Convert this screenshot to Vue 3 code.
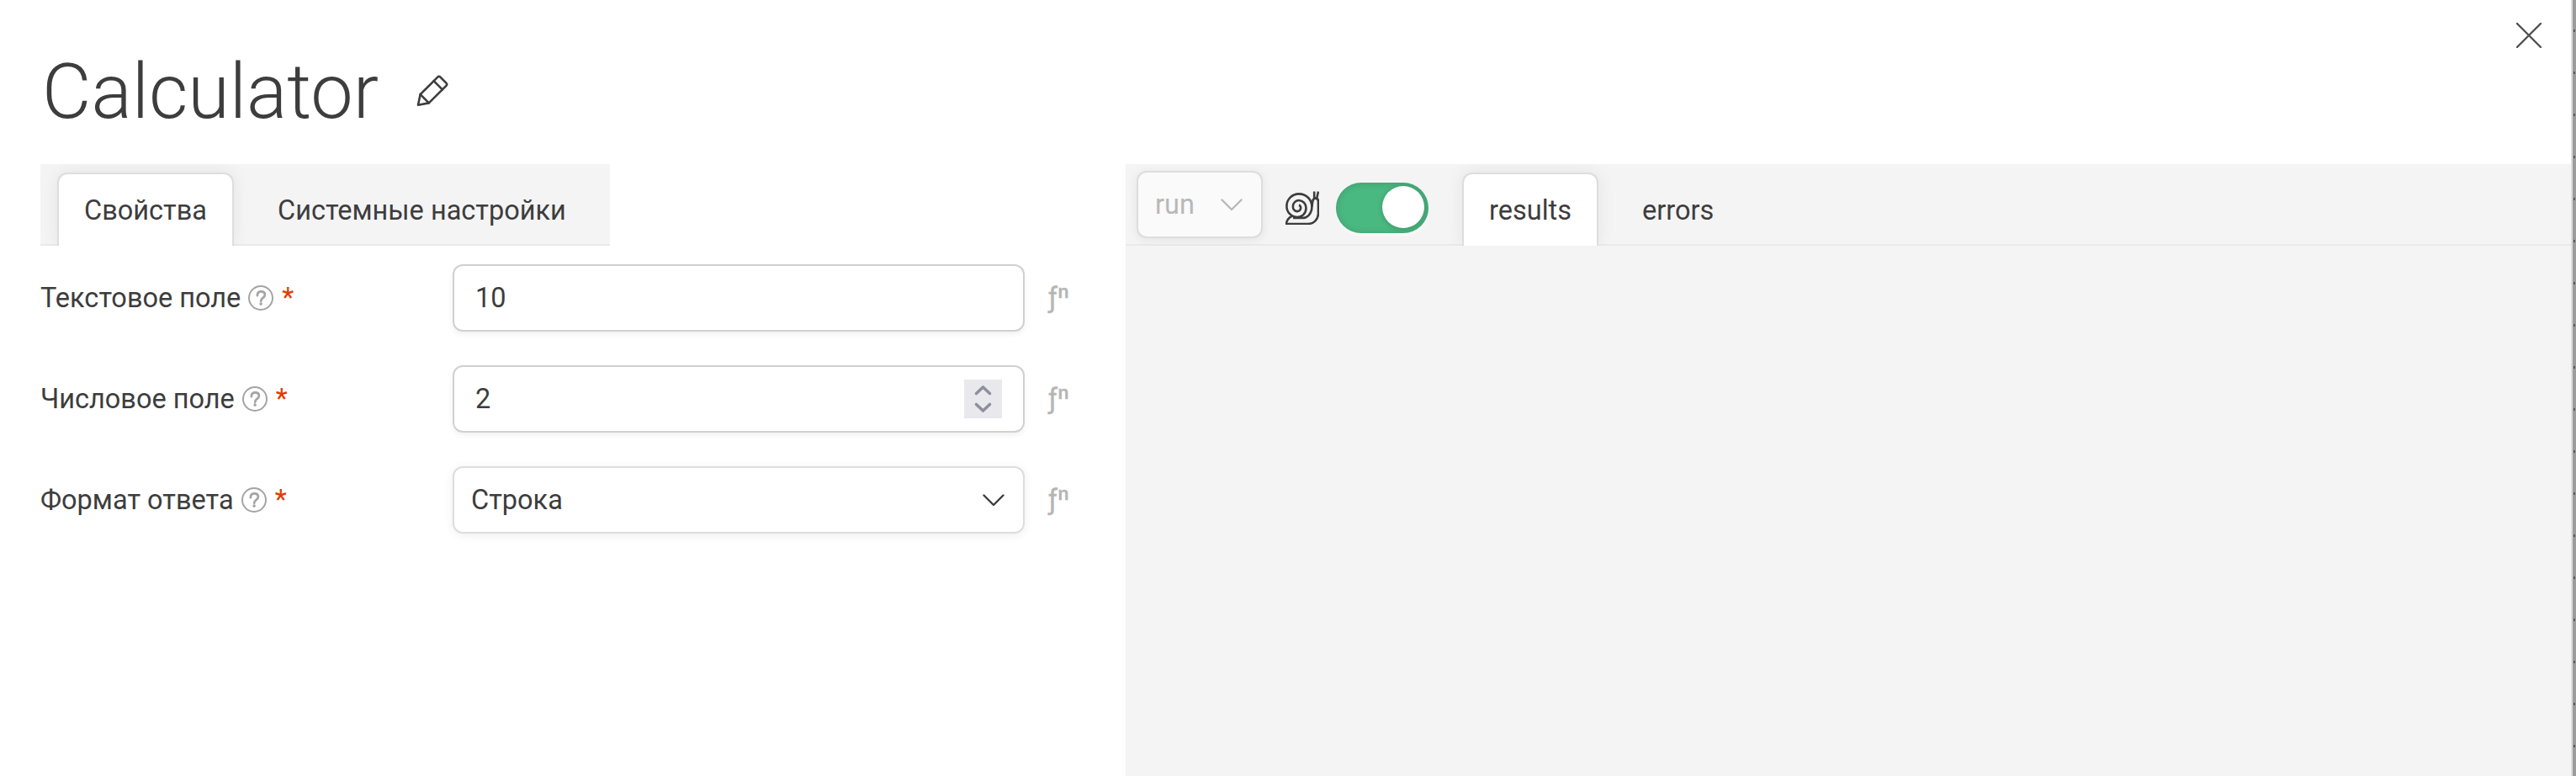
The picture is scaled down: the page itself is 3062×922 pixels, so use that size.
<script setup>
const rows = [
  { label: 'Текстовое поле', value: '10', kind: 'text' },
  { label: 'Числовое поле', value: '2', kind: 'number' },
  { label: 'Формат ответа', value: 'Строка', kind: 'select' },
]
</script>

<template>
  <div class="page">
    <main class="dialog">
      <header class="head">
        <h1 class="title">Calculator</h1>
        <svg class="pencil" viewBox="0 0 38 38">
          <path d="M4.6 23.2L25.2 2.6Q26.8 1.2 28.4 2.6L35.4 9.6Q36.9 11.2 35.4 12.8L14.8 33.4L2 35.8Z" />
          <path d="M4.6 23.2L14.8 33.4M20.6 7.2L30.8 17.4" />
        </svg>
        <svg class="close" viewBox="0 0 30 30"><path d="M1 1L29 29M29 1L1 29" /></svg>
      </header>
      <div class="columns">
        <section class="left">
          <nav class="tabs">
            <div class="tab active">Свойства</div>
            <div class="tab">Системные настройки</div>
          </nav>
          <div class="form">
            <div v-for="row in rows" :key="row.label" class="row">
              <div class="label">
                <span>{{ row.label }}</span>
                <svg class="help" viewBox="0 0 30 30">
                  <circle cx="15" cy="15" r="14" />
                  <path d="M10.9 12.2V11.6Q11 7.3 15.4 7.3Q19.9 7.3 19.9 11.3Q19.9 13.3 17.6 14.9Q15.2 16.6 15.2 18.8" />
                  <circle class="dot" cx="15.1" cy="22.1" r="1.8" />
                </svg>
                <span class="star">*</span>
              </div>
              <div class="field" :class="row.kind">
                <span>{{ row.value }}</span>
                <div v-if="row.kind === 'number'" class="spinner">
                  <svg viewBox="0 0 45 46"><path d="M14.5 16.5L22.5 9L30.5 16.5M14.5 29.5L22.5 37L30.5 29.5" /></svg>
                </div>
                <svg v-if="row.kind === 'select'" class="chevron" viewBox="0 0 26 15"><path d="M1.5 1.5L13 13L24.5 1.5" /></svg>
              </div>
              <span class="fn">ƒⁿ</span>
            </div>
          </div>
        </section>
        <section class="right">
          <nav class="toolbar">
            <div class="run">
              <span>run</span>
              <svg class="chevron" viewBox="0 0 26 15"><path d="M1.5 1.5L13 13L24.5 1.5" /></svg>
            </div>
            <svg class="snail" viewBox="0 0 40 40">
              <path d="M15.9 16.9C17.7 17.1 18.3 19 18.1 20.6C17.8 22.8 15.8 24.3 13.6 24.1C10.6 23.8 8.7 21.2 8.9 17.9C9.2 13.9 12.4 10.9 16 11C21 11.2 24.6 15.3 24.5 20.2C24.4 26.3 20 31 14 31C7 31 1.4 25.2 1.4 18C1.4 9.8 7.8 3.4 16 3.4C24.6 3.4 31.4 9.8 31.4 18.6C31.4 26.5 26.4 32 19.6 32H9" />
              <path d="M7.6 29.8C3.6 31.8 1.3 35 1 39H26.5C34 39 39 33.4 39 26.5V12.5C39 9.8 37.8 8.6 35.8 8.6C33.6 8.6 32.6 10 32.3 12.2L31.4 18.6M34.2 9V0.5M37.2 9L39 0.5" />
            </svg>
            <div class="toggle"><i class="knob"></i></div>
            <div class="tab active">results</div>
            <div class="tab">errors</div>
          </nav>
        </section>
      </div>
    </main>
    <aside class="backdrop"><i v-for="n in 18" :key="n" class="speck"></i></aside>
  </div>
</template>

<style>
body { margin: 0; }
</style>

<style scoped>
* { box-sizing: border-box; }
.page {
  display: flex;
  width: 3062px;
  height: 922px;
  overflow: hidden;
  background: #fff;
  color: #3d3d3d;
  font: 400 32.5px/40px Roboto, sans-serif;
}
.dialog { width: 3058px; height: 922px; border-right: 2px solid #ddd; }
.backdrop {
  width: 4px;
  height: 922px;
  padding-top: 35px;
  background: #9c9c9c;
  display: flex;
  flex-direction: column;
  align-items: center;
  gap: 47px;
}
.speck { flex: none; width: 2px; height: 3px; background: #5c5c5c; }
svg { display: block; flex: none; fill: none; stroke: currentColor; stroke-linecap: round; stroke-linejoin: round; }
.head { display: flex; height: 195px; padding: 27px 35px 0 50px; align-items: flex-start; }
.title { margin: 31px 0 0; width: 445px; font-size: 90px; line-height: 104px; font-weight: 300; white-space: nowrap; }
.pencil { width: 38px; height: 38px; margin-top: 62px; stroke-width: 2.6; }
.close { width: 30px; height: 30px; margin-left: auto; stroke-width: 2.4; color: #505050; }
.columns { display: flex; height: 727px; }
.left { width: 1290px; margin-left: 48px; }
.right { flex: 1; background: #f4f4f4; }
.tabs, .toolbar {
  display: flex;
  height: 97px;
  background: #f4f4f4;
  border-bottom: 2px solid #eaeaea;
  padding-top: 10px;
  clip-path: inset(0);
}
.tabs { width: 677px; padding-left: 20px; }
.tab { height: 87px; padding: 25px 32px 0 52px; white-space: nowrap; }
.tab.active {
  width: 210px;
  padding: 23px 0 0 30px;
  background: #fff;
  border: 2px solid #ddd;
  border-bottom: 0;
  border-radius: 12px 12px 0 0;
  box-shadow: 0 0 20px rgba(0, 0, 0, 0.07);
}
.toolbar .tab.active { width: 162px; }
.form { display: flex; flex-direction: column; gap: 40px; padding-top: 22px; }
.row { display: flex; height: 80px; align-items: center; }
.label { display: flex; width: 490px; align-items: center; }
.help { width: 30px; height: 30px; margin-left: 9px; color: #a4a4a4; stroke-width: 2; }
.help path { stroke-width: 2.7; }
.help .dot { fill: currentColor; stroke: none; }
.star { margin-left: 10px; color: #e03c00; }
.field {
  display: flex;
  align-items: center;
  justify-content: space-between;
  width: 680px;
  height: 80px;
  border: 2px solid #d0d0d0;
  border-radius: 12px;
  padding: 0 25px 0 25px;
  box-shadow: 0 3px 6px rgba(0, 0, 0, 0.06);
}
.field.select { border-color: #ddd; padding: 0 22px 0 20px; box-shadow: 0 2px 12px rgba(0, 0, 0, 0.07); }
.spinner { width: 45px; height: 46px; background: #e9e9ed; color: #8f8f9d; }
.spinner svg { stroke-width: 3.6; }
.chevron { width: 26px; height: 15px; stroke-width: 2.4; }
.fn { margin-left: 28px; color: #b5b5b5; -webkit-text-stroke: 0.4px #b5b5b5; }
.run {
  display: flex;
  align-items: center;
  justify-content: space-between;
  width: 150px;
  height: 80px;
  margin: -2px 0 0 13px;
  padding: 0 22px 0 20px;
  border: 2px solid #ddd;
  border-radius: 12px;
  background: #fafafa;
  color: #b8b8b8;
  box-shadow: 0 2px 12px rgba(0, 0, 0, 0.07);
}
.snail { width: 40px; height: 40px; margin: 22px 0 0 27px; stroke-width: 2.6; stroke-linecap: butt; }
.toggle {
  width: 110px;
  height: 60px;
  margin: 12px 40px 0 20px;
  padding: 4px 5px 0 55px;
  border-radius: 30px;
  background: #4ab881;
  box-shadow: inset 0 1px 8px rgba(0, 0, 0, 0.15), 1px 3px 3px #fafafa;
}
.knob { display: block; width: 50px; height: 50px; border-radius: 50%; background: #fff; box-shadow: 0 1px 6px rgba(0, 0, 0, 0.2); }
</style>
